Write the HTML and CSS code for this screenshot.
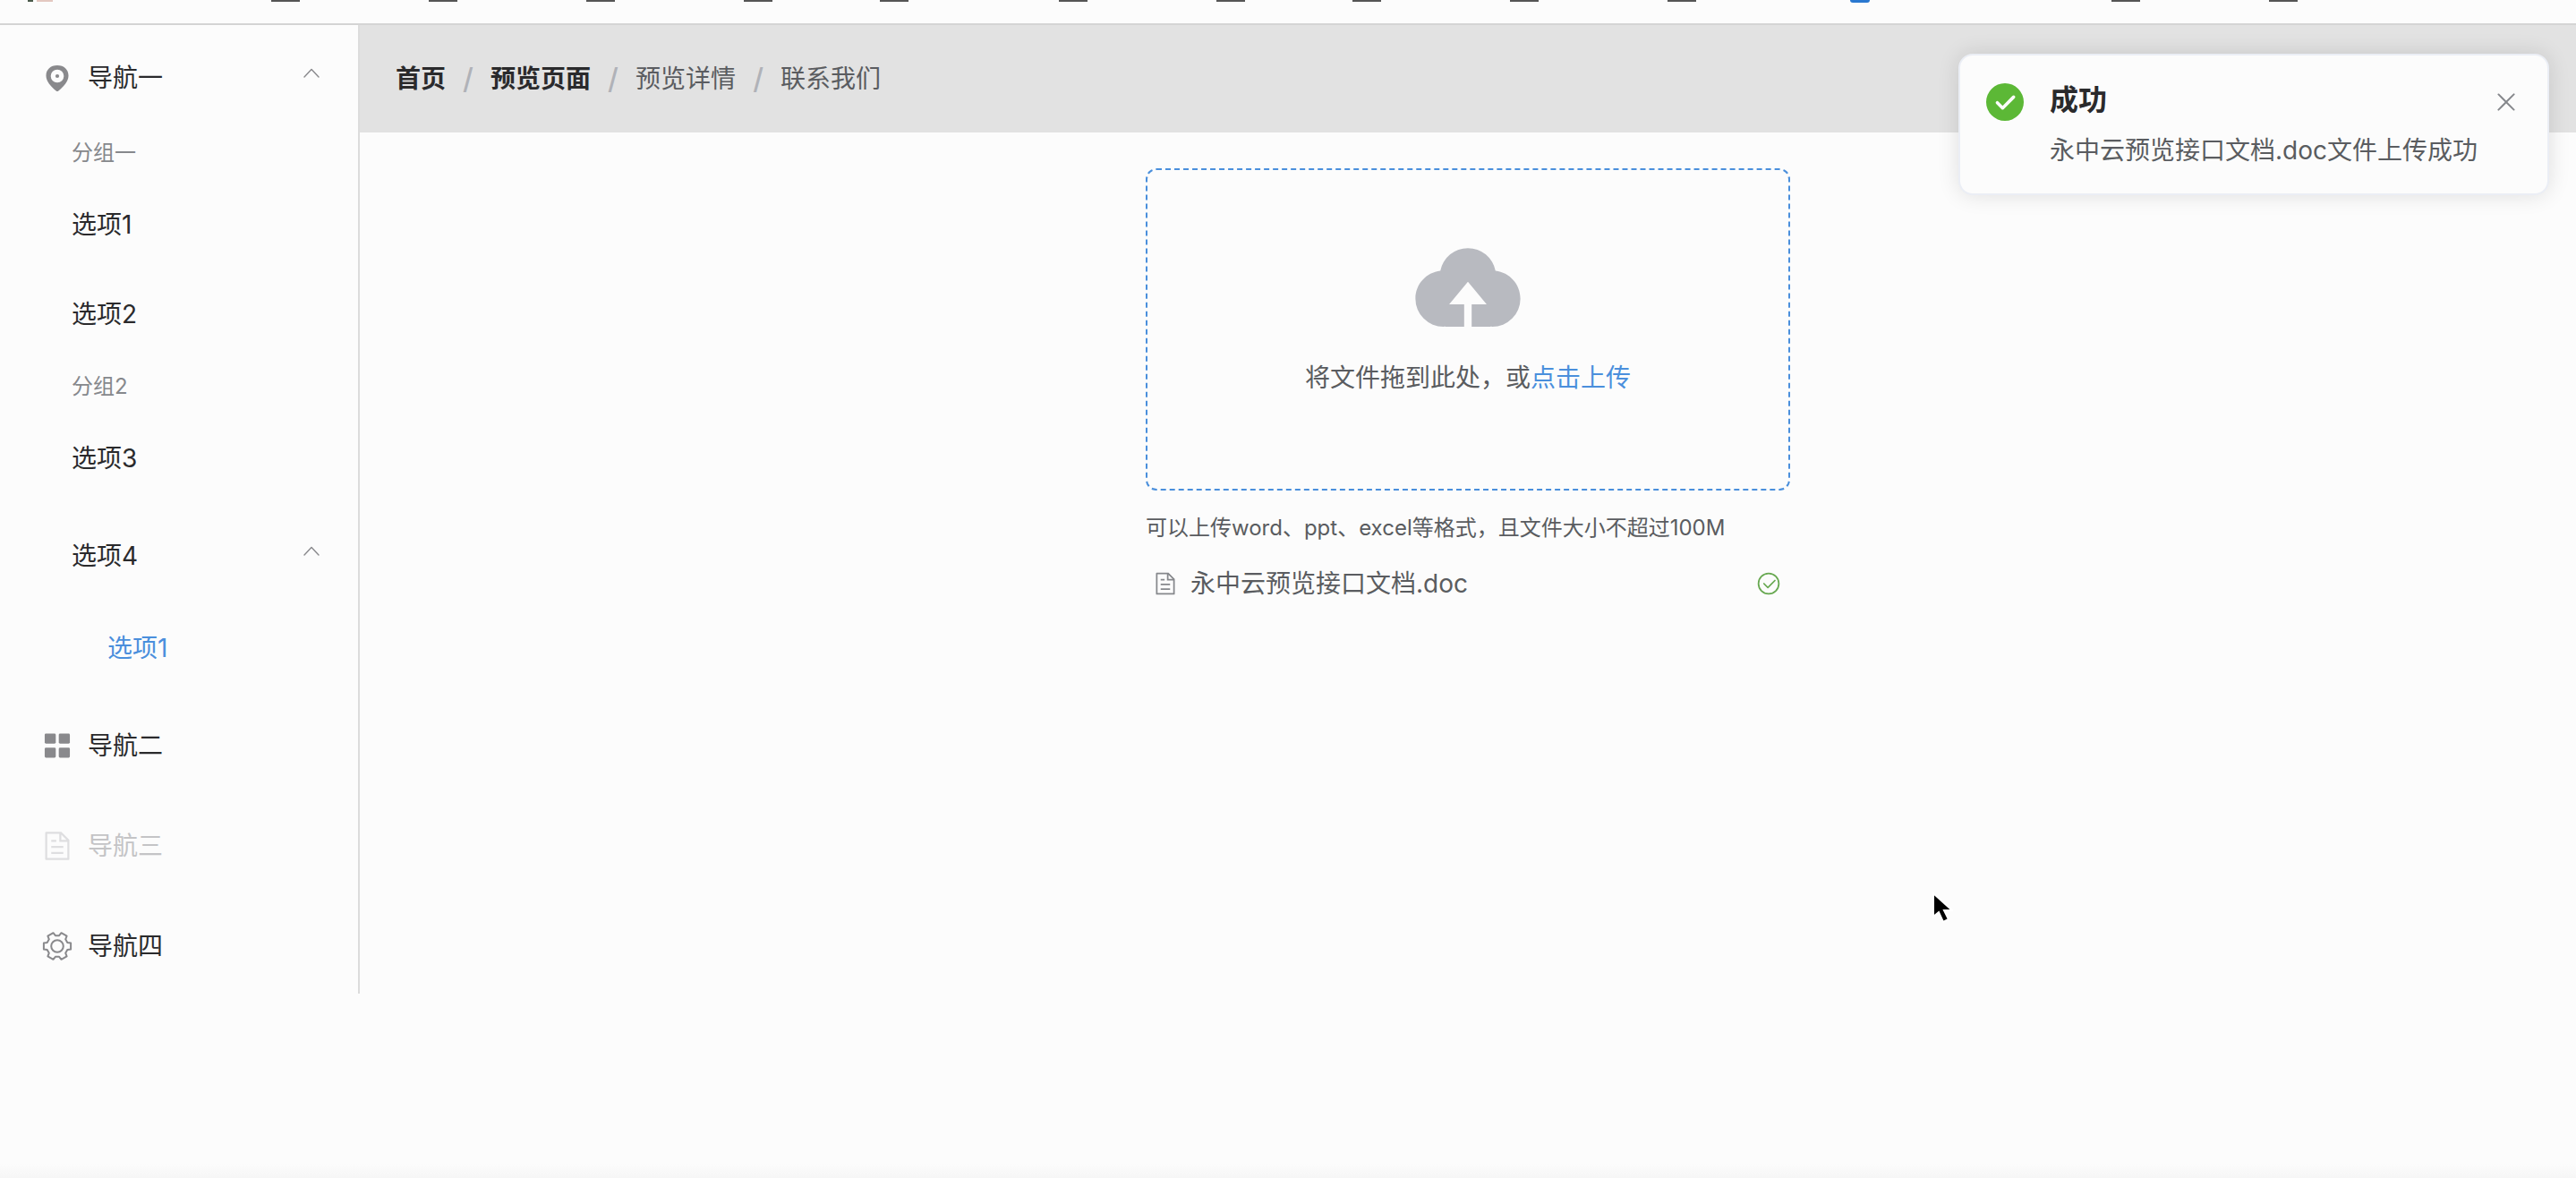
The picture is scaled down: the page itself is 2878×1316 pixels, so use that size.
FILE: index.html
```html
<!DOCTYPE html>
<html lang="zh-CN">
<head>
    <meta charset="UTF-8">
    <title>预览页面</title>
    <link rel="stylesheet" href="styles.css">
</head>
<body>
    <!-- 书签栏底边 -->
    <div class="bookmarks">
        <i class="favicon"></i>
        <i class="folder"></i><i class="folder"></i><i class="folder"></i><i class="folder"></i>
        <i class="folder short"></i><i class="folder wide"></i><i class="folder"></i><i class="folder short"></i>
        <i class="folder"></i><i class="folder"></i><i class="folder blue"></i><i class="folder far"></i><i class="folder"></i>
    </div>

    <div class="layout">
        <nav class="sidebar">
            <button class="title">
                <svg class="icon" viewBox="0 0 1024 1024"><path fill-rule="evenodd" d="M512 114c215 0 356 135 356 325 0 190-160 350-318 486a60 60 0 0 1-76 0C316 789 156 629 156 439 156 249 297 114 512 114zm0 133a208 208 0 1 0 0 416 208 208 0 0 0 0-416z"/><circle cx="512" cy="455" r="60"/></svg>
                <span>导航一</span>
                <svg class="arrow" viewBox="0 0 1024 1024"><path d="m488.832 344.32-339.84 356.672a32 32 0 0 0 0 44.16l.384.384a29.44 29.44 0 0 0 42.688 0l320-335.872 319.872 335.872a29.44 29.44 0 0 0 42.688 0l.384-.384a32 32 0 0 0 0-44.16L535.168 344.32a32 32 0 0 0-46.336 0z"/></svg>
            </button>
            <div class="group">分组一</div>
            <a class="item" href="#">选项1</a>
            <a class="item" href="#">选项2</a>
            <div class="group">分组2</div>
            <a class="item" href="#">选项3</a>
            <button class="title sub">
                <span>选项4</span>
                <svg class="arrow" viewBox="0 0 1024 1024"><path d="m488.832 344.32-339.84 356.672a32 32 0 0 0 0 44.16l.384.384a29.44 29.44 0 0 0 42.688 0l320-335.872 319.872 335.872a29.44 29.44 0 0 0 42.688 0l.384-.384a32 32 0 0 0 0-44.16L535.168 344.32a32 32 0 0 0-46.336 0z"/></svg>
            </button>
            <a class="item deep active" href="#">选项1</a>
            <button class="title">
                <svg class="icon" viewBox="0 0 1024 1024"><rect x="112" y="128" width="352" height="320" rx="40"/><rect x="560" y="128" width="352" height="320" rx="40"/><rect x="112" y="576" width="352" height="320" rx="40"/><rect x="560" y="576" width="352" height="320" rx="40"/></svg>
                <span>导航二</span>
            </button>
            <button class="title" disabled>
                <svg class="icon" viewBox="0 0 1024 1024"><path d="M832 384H576V128H192v768h640V384zm-26.496-64L640 154.496V320h165.504zM160 64h480l256 256v608a32 32 0 0 1-32 32H160a32 32 0 0 1-32-32V96a32 32 0 0 1 32-32zm160 448h384v64H320v-64zm0-192h160v64H320v-64zm0 384h384v64H320v-64z"/></svg>
                <span>导航三</span>
            </button>
            <button class="title">
                <svg class="icon gear" viewBox="-18 -18 36 36"><path d="M11.3-4.1 15.1-3.5V3.5L11.3 4.1 9.2 7.7 10.6 11.3 4.5 14.8 2.1 11.8H-2.1L-4.5 14.8-10.6 11.3-9.2 7.7-11.3 4.1-15.1 3.5V-3.5L-11.3-4.1-9.2-7.7-10.6-11.3-4.5-14.8-2.1-11.8H2.1L4.5-14.8 10.6-11.3 9.2-7.7z"/><circle r="6.8"/></svg>
                <span>导航四</span>
            </button>
        </nav>

        <div class="content">
            <header class="breadcrumb">
                <a class="link" href="#">首页</a><span class="slash">/</span>
                <a class="link" href="#">预览页面</a><span class="slash">/</span>
                <span>预览详情</span><span class="slash">/</span>
                <span>联系我们</span>
            </header>

            <main class="main">
                <div class="upload">
                    <div class="dragger">
                        <svg class="cloud" viewBox="0 0 1024 1024"><path d="M544 864V672h128L512 480 352 672h128v192H320v-1.6c-5.376.32-10.496 1.6-16 1.6A240 240 0 0 1 64 624c0-123.136 93.12-223.488 212.608-237.248A239.808 239.808 0 0 1 512 192a239.872 239.872 0 0 1 235.456 194.752c119.488 13.76 212.48 114.112 212.48 237.248a240 240 0 0 1-240 240c-5.376 0-10.56-1.28-16-1.6v1.6H544z"/></svg>
                        <div>将文件拖到此处，或<button class="pick">点击上传</button></div>
                    </div>
                    <div class="tip">可以上传word、ppt、excel等格式，且文件大小不超过100M</div>
                    <div class="file">
                        <svg class="file-icon" viewBox="0 0 1024 1024"><path d="M832 384H576V128H192v768h640V384zm-26.496-64L640 154.496V320h165.504zM160 64h480l256 256v608a32 32 0 0 1-32 32H160a32 32 0 0 1-32-32V96a32 32 0 0 1 32-32zm160 448h384v64H320v-64zm0-192h160v64H320v-64zm0 384h384v64H320v-64z"/></svg>
                        <a class="file-name" href="#">永中云预览接口文档.doc</a>
                        <svg class="file-ok" viewBox="0 0 1024 1024"><path d="M512 896a384 384 0 1 0 0-768 384 384 0 0 0 0 768zm0 64a448 448 0 1 1 0-896 448 448 0 0 1 0 896z"/><path d="M745.344 361.344a32 32 0 0 1 45.312 45.312l-288 288a32 32 0 0 1-45.312 0l-160-160a32 32 0 1 1 45.312-45.312L480 626.752l265.344-265.408z"/></svg>
                    </div>
                </div>
            </main>
        </div>
    </div>

    <!-- 上传成功通知 -->
    <div class="notification" role="alert">
        <svg class="success" viewBox="0 0 1024 1024"><path d="M512 64a448 448 0 1 1 0 896 448 448 0 0 1 0-896zm-55.808 536.384-99.52-99.584a38.4 38.4 0 1 0-54.336 54.336l126.72 126.72a38.272 38.272 0 0 0 54.336 0l262.4-262.464a38.4 38.4 0 1 0-54.272-54.336L456.192 600.384z"/></svg>
        <div class="notice-body">
            <h2>成功</h2>
            <p>永中云预览接口文档.doc文件上传成功</p>
        </div>
        <button class="close" aria-label="关闭">
            <svg viewBox="0 0 1024 1024"><path d="M764.288 214.592 512 466.88 259.712 214.592a31.936 31.936 0 0 0-45.12 45.12L466.752 512 214.528 764.224a31.936 31.936 0 1 0 45.12 45.184L512 557.184l252.288 252.288a31.936 31.936 0 0 0 45.12-45.12L557.12 512.064l252.288-252.352a31.936 31.936 0 1 0-45.12-45.184z"/></svg>
        </button>
    </div>

    <svg class="cursor" viewBox="0 0 24 36"><path d="M2 2v26l6-5 5 11 6-3-5-10h9z"/></svg>
</body>
</html>
```
FILE: styles.css
```css
* {
    box-sizing: border-box;
}
body {
    margin: 0;
    min-height: 100vh;
    background: linear-gradient(to top, #f6f6f6, #fcfcfc 16px);
    color: #5a5c60;
    font: 28px/44px Inter, "Noto Sans CJK SC", sans-serif;
}
a {
    color: inherit;
    text-decoration: none;
}
button {
    padding: 0;
    border: 0;
    background: none;
    color: inherit;
    font: inherit;
}
svg {
    flex: none;
    fill: currentColor;
}

/* 书签栏 */
.bookmarks {
    display: flex;
    height: 28px;
    padding-left: 31px;
    border-bottom: 2px solid #d4d4d4;
    background: #fcfcfc;
    overflow: hidden;
}
.favicon {
    width: 28px;
    height: 2px;
    margin-right: 100px;
    background: linear-gradient(to right, #4a5a4a 6px, #fcfcfc 6px 10px, #e4c8c0 10px);
}
.folder {
    flex: none;
    width: 32px;
    height: 2px;
    margin-left: 144px;
    background: #555;
}
.folder.short {
    margin-left: 120px;
}
.folder.wide {
    margin-left: 168px;
}
.folder.blue {
    width: 22px;
    height: 3px;
    margin-left: 172px;
    border-radius: 0 0 4px 4px;
    background: #2a78d0;
}
.folder.far {
    margin-left: 270px;
}

.layout {
    display: flex;
    align-items: flex-start;
}

/* 侧边菜单 */
.sidebar {
    flex: none;
    width: 402px;
    border-right: 2px solid #dcdcdc;
    color: #2a2a2c;
}
.title {
    display: flex;
    align-items: center;
    width: 100%;
    height: 112px;
    padding: 6px 40px 0;
    text-align: left;
}
.title.sub {
    padding-left: 80px;
}
.title:disabled {
    color: #c4c4c6;
}
.icon {
    width: 36px;
    height: 36px;
    margin: 0 16px 0 6px;
    color: #89898c;
}
.title:disabled .icon {
    color: #dedee0;
}
.gear {
    fill: none;
    stroke: currentColor;
    stroke-width: 2;
    stroke-linejoin: round;
}
.arrow {
    width: 24px;
    height: 24px;
    margin: 0 0 12px auto;
    color: #89898c;
}
.group {
    padding: 9px 0 8px 80px;
    color: #86888c;
    font-size: 24px;
}
.item {
    display: block;
    padding-left: 80px;
    line-height: 100px;
}
.item.deep {
    padding-left: 120px;
}
.item.active {
    color: #4a8fdc;
}

.content {
    flex: 1;
}
.breadcrumb {
    display: flex;
    align-items: center;
    height: 120px;
    padding-left: 40px;
    background: #e2e2e2;
}
.link {
    color: #2a2a2c;
    font-weight: 700;
}
.slash {
    width: 50px;
    color: #b0b2b8;
    font-size: 32px;
    font-weight: 500;
    text-align: center;
}

/* 上传区域 */
.main {
    padding: 40px;
}
.upload {
    max-width: 720px;
    margin: 0 auto;
}
.dragger {
    padding: 62px 20px 102px;
    border: 2px dashed #4a8fdc;
    border-radius: 12px;
    text-align: center;
}
.cloud {
    display: block;
    width: 134px;
    height: 134px;
    margin: 0 auto 14px;
    color: #b8bac0;
}
.pick {
    color: #4a8fdc;
}
.tip {
    margin-top: 20px;
    font-size: 24px;
}
.file {
    display: flex;
    align-items: center;
    margin-top: 18px;
    padding: 0 10px 0 8px;
}
.file-icon {
    width: 28px;
    height: 28px;
    margin-right: 14px;
    color: #86888c;
}
.file-ok {
    width: 28px;
    height: 28px;
    margin-left: auto;
    color: #67a850;
}

/* 通知 */
.notification {
    position: absolute;
    top: 60px;
    right: 30px;
    display: flex;
    align-items: flex-start;
    width: 660px;
    padding: 28px 30px 26px 26px;
    border: 2px solid #ebeef5;
    border-radius: 16px;
    background: #fcfcfc;
    box-shadow: 0 0 24px rgba(0, 0, 0, 0.12);
}
.success {
    width: 48px;
    height: 48px;
    margin-right: 26px;
    color: #5cb836;
}
.notice-body {
    flex: 1;
}
.notice-body h2 {
    margin: 0 0 12px;
    color: #2a2a2c;
    font-size: 32px;
    line-height: 44px;
}
.notice-body p {
    margin: 0;
}
.close {
    margin-top: 8px;
    color: #86888c;
}
.close svg {
    display: block;
    width: 32px;
    height: 32px;
}

.cursor {
    position: absolute;
    left: 2158px;
    top: 996px;
    width: 24px;
    height: 36px;
    fill: #000;
    stroke: #fff;
    stroke-width: 2;
}
```
